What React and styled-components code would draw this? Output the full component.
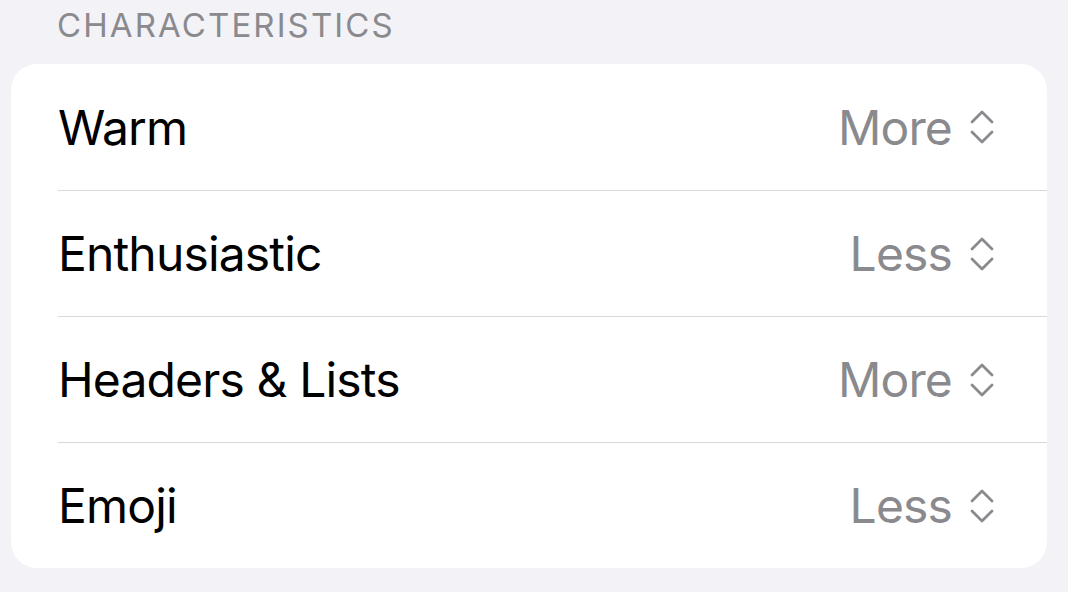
import React from "react";
import styled, { createGlobalStyle } from "styled-components";

const Global = createGlobalStyle`
  html, body { margin: 0; padding: 0; background: #f2f2f7; }
  body { font-family: Inter, "Liberation Sans", sans-serif; -webkit-font-smoothing: antialiased; }
`;

const Page = styled.div`
  width: 1068px;
  height: 592px;
  background: #f2f2f7;
  box-sizing: border-box;
  padding: 0 21px 0 11px;
  display: flex;
  flex-direction: column;
  overflow: hidden;
`;

const SectionTitle = styled.div`
  height: 64px;
  box-sizing: border-box;
  padding: 3px 0 0 46px;
  font-size: 33px;
  line-height: 44px;
  color: #8a8a8e;
  letter-spacing: 2.1px;
`;

const Card = styled.div`
  background: #ffffff;
  border-radius: 26px;
  display: flex;
  flex-direction: column;
  overflow: hidden;
`;

const Row = styled.div`
  height: 126px;
  box-sizing: border-box;
  display: flex;
  align-items: center;
  justify-content: space-between;
  margin-left: 47px;
  padding-right: 52px;
  border-top: ${(p) => (p.$first ? "none" : "1.5px solid #d9d9dd")};
`;

const Label = styled.span`
  font-size: 48px;
  color: #000000;
  letter-spacing: -0.85px;
`;

const Value = styled.span`
  display: flex;
  align-items: center;
  gap: 17px;
  font-size: 48px;
  color: #8a8a8e;
  letter-spacing: -0.85px;
`;

const Chevrons = () => (
  <svg width="26" height="38" viewBox="0 0 26 38" fill="none">
    <path d="M3 14 L13 4 L23 14" stroke="#8a8a8e" strokeWidth="2.8" strokeLinecap="round" strokeLinejoin="round" />
    <path d="M3 24 L13 34 L23 24" stroke="#8a8a8e" strokeWidth="2.8" strokeLinecap="round" strokeLinejoin="round" />
  </svg>
);

const rows = [
  ["Warm", "More"],
  ["Enthusiastic", "Less"],
  ["Headers & Lists", "More"],
  ["Emoji", "Less"],
];

export default function App() {
  return (
    <>
      <Global />
      <Page>
        <SectionTitle>CHARACTERISTICS</SectionTitle>
        <Card>
          {rows.map(([l, v], i) => (
            <Row key={l} $first={i === 0}>
              <Label>{l}</Label>
              <Value>
                {v}
                <Chevrons />
              </Value>
            </Row>
          ))}
        </Card>
      </Page>
    </>
  );
}
